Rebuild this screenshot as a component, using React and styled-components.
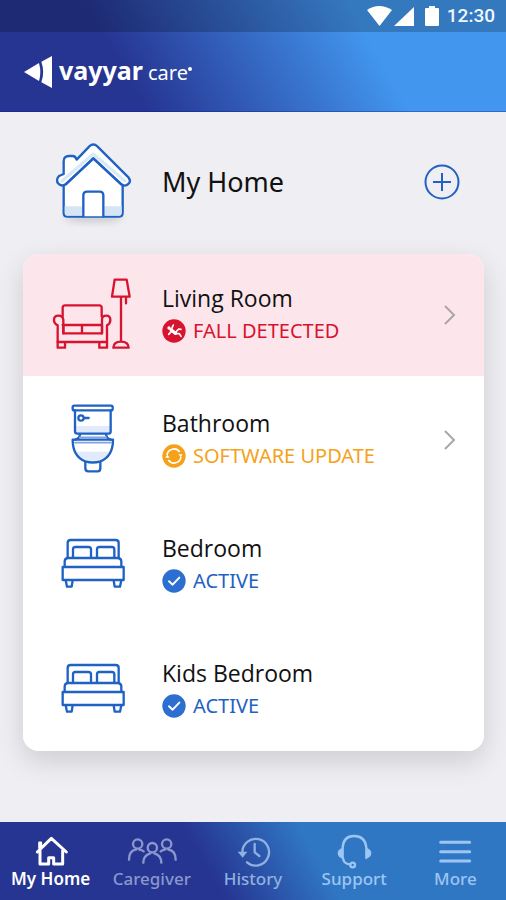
import React from 'react';
import styled, { createGlobalStyle } from 'styled-components';

const BLUE = '#1f62c4';
const RED = '#d8132f';
const ORANGE = '#f5a21b';

const GlobalStyle = createGlobalStyle`
  *, *::before, *::after { box-sizing: border-box; }
  html, body { margin: 0; padding: 0; }
  body {
    background: #eeeef3;
    color: #111;
    font-family: 'Noto Sans', 'Open Sans', sans-serif;
  }
  h1, h2, p, ul { margin: 0; padding: 0; font-weight: 400; }
  button { font: inherit; color: inherit; border: 0; background: none; padding: 0; cursor: pointer; }
  svg { display: block; flex: none; }
`;

const Screen = styled.div`
  min-height: 100vh;
  display: flex;
  flex-direction: column;
`;

const Top = styled.header`
  background: linear-gradient(60deg, #263592 26%, #4296ee 72%);
`;

const StatusBar = styled.div`
  height: 32px;
  padding-right: 11px;
  display: flex;
  align-items: center;
  justify-content: flex-end;
  background: rgba(0, 0, 0, 0.2);
  color: #f0f6ff;
  font: 500 19px/32px Roboto, sans-serif;
`;

const StatusIcons = styled.svg`
  margin-right: 8px;
`;

const BrandBar = styled.div`
  height: 80px;
  padding: 0 24px;
  display: flex;
  align-items: center;
  gap: 7px;
  border-bottom: 1px solid rgba(0, 20, 150, 0.35);
  color: #fff;
`;

const Brand = styled.div`
  display: flex;
  align-items: baseline;
  gap: 5px;
  line-height: 32px;
`;

const BrandName = styled.span`
  font-size: 25px;
  font-weight: 700;
`;

const BrandProduct = styled.span`
  display: flex;
  font-size: 20px;
`;

const BrandMark = styled.span`
  width: 4px;
  height: 4px;
  margin-top: 10px;
  border-radius: 50%;
  background: #fff;
`;

const Main = styled.main`
  flex: 1;
  padding: 0 22px 32px 23px;
`;

const HomeRow = styled.div`
  min-height: 142px;
  padding: 0 24px 2px 17px;
  display: flex;
  align-items: center;
  gap: 16px;
`;

const HomeTitle = styled.h1`
  flex: 1;
  font-size: 27px;
  line-height: 36px;
`;

const AddButton = styled.button`
  width: 36px;
  height: 36px;
`;

const Card = styled.ul`
  list-style: none;
  display: flex;
  flex-direction: column;
  gap: 3px;
  overflow: hidden;
  border-radius: 16px;
  background: #fff;
`;

const CardShadow = styled.div`
  border-radius: 16px;
  box-shadow: 0 10px 28px rgba(0, 0, 0, 0.14);
`;

const Row = styled.div`
  width: 100%;
  min-height: 122px;
  padding: 0 27px 0 17px;
  display: flex;
  align-items: center;
  gap: 16px;
  text-align: left;
  && { background: ${(p) => (p.$alert ? '#fde6eb' : '#fff')}; }
`;

const RowText = styled.div`
  flex: 1;
  padding-bottom: 2px;
`;

const RoomName = styled.h2`
  font-family: 'Open Sans', 'Noto Sans', sans-serif;
  font-size: 23px;
  line-height: 34px;
`;

const Status = styled.p`
  display: flex;
  align-items: center;
  gap: 7px;
  font-size: 20px;
  line-height: 32px;
  color: ${(p) => p.$color};
`;

const Nav = styled.nav`
  min-height: 78px;
  padding-top: 11px;
  display: grid;
  grid-template-columns: repeat(5, 1fr);
  align-items: start;
  background: linear-gradient(60deg, #263592 41%, #3077c3 62%);
`;

const NavItem = styled.button`
  display: flex;
  flex-direction: column;
  align-items: center;
  && { color: ${(p) => (p.$active ? '#fff' : p.$tint)}; }
`;

const NavLabel = styled.span`
  font-size: 17px;
  line-height: 20px;
  font-weight: ${(p) => (p.$active ? 600 : 500)};
`;

function RoomSvg({ box, color, children }) {
  return (
    <svg width="106" height="90" viewBox={box} fill="none" stroke={color} strokeWidth="7" strokeLinejoin="round" strokeLinecap="round" aria-hidden="true">
      {children}
    </svg>
  );
}

function HouseIcon() {
  return (
    <RoomSvg box="0 21 318 270" color={BLUE}>
      <defs>
        <filter id="soft" x="-20%" y="-200%" width="140%" height="500%"><feGaussianBlur stdDeviation="9" /></filter>
      </defs>
      <ellipse cx="160" cy="264" rx="88" ry="16" fill="#000" fillOpacity=".12" stroke="none" filter="url(#soft)" />
      <path d="M71 150 160 76 248 150V248Q248 260 236 260H83Q71 260 71 248Z" fill="#fff" />
      <path d="M74 229H128V257H82Q74 257 74 248ZM193 229H245V248Q245 257 237 257H193Z" fill="#d5e5f5" stroke="none" />
      <path d="M130 259V196Q130 185 141 185H179Q190 185 190 196V259" fill="#fff" />
      <path d="M71 132V94Q71 78 87 78H98Q106 78 110 89L148 49Q160 38 172 49L266 143Q273 152 267 160Q257 172 244 163L160 85 77 163Q64 171 54 160Q47 148 57 138Z" fill="#fff" />
      <path d="M66 153 160 72 255 153" stroke="#d5e5f5" strokeWidth="9" opacity=".9" />
      <path d="M77 163 160 85 244 163" />
    </RoomSvg>
  );
}

function SofaIcon() {
  return (
    <RoomSvg box="0 15 318 270" color={RED}>
      <path d="M68 154V128Q68 121 75 121H178Q185 121 185 128V154M68 180H186M126 180V205M70 180V205H186V180" />
      <path d="M53 231V181Q42 176 42 165Q42 152 55 152Q68 152 70 164V205M201 231V181Q211 176 211 165Q211 152 199 152Q186 152 186 164V205" />
      <path d="M53 231H201M53 231V248H75V234M201 231V248H178V234" />
      <path d="M224 44H260L269 95H216ZM243 97V229M258 97V115M220 248Q221 230 243 230Q265 230 266 248Z" />
    </RoomSvg>
  );
}

function ToiletIcon() {
  return (
    <RoomSvg box="0 15 318 270" color={BLUE}>
      <path d="M106 108H212V126Q212 131 206 131H112Q106 131 106 126ZM106 185H212Q204 198 188 206Q158 219 130 206Q112 198 106 185Z" fill="#e1ebfb" stroke="none" />
      <rect x="98" y="47" width="120" height="14" rx="5" />
      <path d="M105 61V124Q105 131 112 131H206Q212 131 212 124V61M120 132Q120 145 106 149M198 132Q199 145 212 149" />
      <path d="M98 149H219Q219 199 181 214Q158 221 136 214Q98 199 98 149Z" />
      <path d="M105 158H213M119 142H199" stroke="#7fa5df" strokeWidth="5" />
      <path d="M136 216V235Q136 244 145 244H173Q181 244 181 235V216" />
      <circle cx="123" cy="84" r="8" /><path d="M132 84H146" />
    </RoomSvg>
  );
}

function BedIcon() {
  return (
    <RoomSvg box="0 0 318 270" color={BLUE}>
      <path d="M83 112V69Q83 60 92 60H227Q236 60 236 69V112" />
      <path d="M99 112V88Q99 81 106 81H145Q153 81 153 88V112M171 112V88Q171 81 178 81H216Q223 81 223 88V112" />
      <path d="M74 140V125Q74 114 85 114H232Q244 114 244 125V140" />
      <path d="M68 141H251V180H68ZM77 181 81 200H95L98 181M221 181 224 200H240L244 181" />
    </RoomSvg>
  );
}

function FallBadge() {
  return (
    <svg width="24" height="24" viewBox="0 0 72 72" fill="none" stroke="#fff" strokeWidth="6" strokeLinecap="round" strokeLinejoin="round" aria-hidden="true">
      <circle cx="36" cy="36" r="35" fill={RED} stroke="none" />
      <circle cx="21" cy="27" r="5" fill="#fff" stroke="none" />
      <path d="M27 32 40 43" strokeWidth="10" />
      <path d="M28 31 34 18M28 37 20 46M40 41 50 30 57 31M39 44 52 44 57 52" strokeWidth="5" />
    </svg>
  );
}

function UpdateBadge() {
  return (
    <svg width="24" height="24" viewBox="0 0 72 72" fill="none" stroke="#fff" strokeWidth="5" aria-hidden="true">
      <circle cx="36" cy="36" r="35" fill={ORANGE} stroke="none" />
      <path d="M15 33A21 21 0 0 1 53 24M57 39A21 21 0 0 1 19 48" />
      <path d="M49 31H62L56 40ZM10 41H23L16 32Z" fill="#fff" stroke="none" />
    </svg>
  );
}

function CheckBadge() {
  return (
    <svg width="24" height="24" viewBox="0 0 72 72" fill="none" aria-hidden="true">
      <circle cx="36" cy="36" r="35" fill="#2d6fd0" />
      <path d="M21 37 32 47 52 26" stroke="#fff" strokeWidth="6" strokeLinecap="round" strokeLinejoin="round" />
    </svg>
  );
}

function Chevron() {
  return (
    <svg width="14" height="22" viewBox="0 0 14 22" fill="none" stroke="#a9a5ac" strokeWidth="2" aria-hidden="true">
      <path d="M2 2 11 11 2 20" />
    </svg>
  );
}

const rooms = [
  { name: 'Living Room', status: 'FALL DETECTED', color: RED, Icon: SofaIcon, Badge: FallBadge, open: true, alert: true },
  { name: 'Bathroom', status: 'SOFTWARE UPDATE', color: ORANGE, Icon: ToiletIcon, Badge: UpdateBadge, open: true },
  { name: 'Bedroom', status: 'ACTIVE', color: BLUE, Icon: BedIcon, Badge: CheckBadge },
  { name: 'Kids Bedroom', status: 'ACTIVE', color: BLUE, Icon: BedIcon, Badge: CheckBadge },
];

const tabs = [
  {
    label: 'My Home', active: true, box: '62 54 180 108',
    art: (
      <>
        <path d="M119 106V147H145V128H160V147H187V106M111 111 153 70 198 111" strokeWidth="9" />
        <path d="M117 98V83H122V94Z" />
      </>
    ),
  },
  {
    label: 'Caregiver', tint: '#8b97cc', box: '366 54 180 108',
    art: (
      <>
        <circle cx="413" cy="87" r="14" /><circle cx="500" cy="87" r="14" /><circle cx="457" cy="98" r="14" />
        <path d="M387 134Q387 107 408 104M418 104Q426 105 431 109M527 134Q527 107 505 104M495 104Q487 105 482 109M430 143Q430 121 451 115M484 143Q484 121 463 115" />
      </>
    ),
  },
  {
    label: 'History', tint: '#8fb0e0', box: '-90 54 180 108',
    art: (
      <>
        <path d="M-32 112A40 40 0 1 1 -18 142M5 87V112L19 123" />
        <path d="M-46 110H-17L-31 128Z" fill="currentColor" stroke="none" />
      </>
    ),
  },
  {
    label: 'Support', tint: '#9dc5f3', box: '214 54 180 108',
    art: (
      <>
        <path d="M270 129V98Q272 63 304 63Q338 63 341 98V129" />
        <path d="M270 99Q255 103 255 115Q256 128 270 130ZM341 99Q356 103 356 115Q355 128 341 130Z" fill="currentColor" stroke="none" />
        <path d="M271 129Q272 146 292 148" /><circle cx="300" cy="150" r="7" />
      </>
    ),
  },
  {
    label: 'More', tint: '#9dc5f3', box: '519 54 180 108',
    art: <path d="M566 82H653M566 110H653M566 138H653" strokeWidth="9" />,
  },
];

export default function App() {
  return (
    <Screen>
      <GlobalStyle />
      <Top>
        <StatusBar>
          <StatusIcons width="72" height="22" viewBox="0 0 72 22" fill="#fff" aria-hidden="true">
            <path d="M0 5Q12-3 25 5L12.500 21Z" />
            <path d="M47 2V21H27Z" />
            <path d="M59 3H62V1H68V3H71Q72 3 72 4V20Q72 21 71 21H59Q58 21 58 20V4Q58 3 59 3Z" />
          </StatusIcons>
          <time>12:30</time>
        </StatusBar>
        <BrandBar>
          <svg width="28" height="34" viewBox="0 0 84 102" fill="#fff" aria-hidden="true">
            <path d="M0 51 45 24Q53 51 45 78Z" />
            <path d="M52 20 84 3V99L52 82Q63 51 52 20Z" />
          </svg>
          <Brand>
            <BrandName>vayyar</BrandName>
            <BrandProduct>care<BrandMark /></BrandProduct>
          </Brand>
        </BrandBar>
      </Top>
      <Main>
        <HomeRow>
          <HouseIcon />
          <HomeTitle>My Home</HomeTitle>
          <AddButton aria-label="Add">
            <svg width="36" height="36" viewBox="0 0 36 36" fill="none" stroke={BLUE} strokeWidth="2" aria-hidden="true">
              <circle cx="18" cy="18" r="16.500" />
              <path d="M9 18H27M18 9V27" />
            </svg>
          </AddButton>
        </HomeRow>
        <CardShadow>
          <Card>
            {rooms.map(({ name, status, color, Icon, Badge, open, alert }) => (
              <li key={name}>
                <Row as={open ? 'button' : 'div'} $alert={alert}>
                  <Icon />
                  <RowText>
                    <RoomName>{name}</RoomName>
                    <Status $color={color}><Badge />{status}</Status>
                  </RowText>
                  {open && <Chevron />}
                </Row>
              </li>
            ))}
          </Card>
        </CardShadow>
      </Main>
      <Nav>
        {tabs.map(({ label, active, tint, box, art }) => (
          <NavItem key={label} $active={active} $tint={tint} aria-current={active ? 'page' : undefined}>
            <svg width="60" height="36" viewBox={box} fill="none" stroke="currentColor" strokeWidth="7" strokeLinecap="round" strokeLinejoin="round" aria-hidden="true">
              {art}
            </svg>
            <NavLabel $active={active}>{label}</NavLabel>
          </NavItem>
        ))}
      </Nav>
    </Screen>
  );
}
